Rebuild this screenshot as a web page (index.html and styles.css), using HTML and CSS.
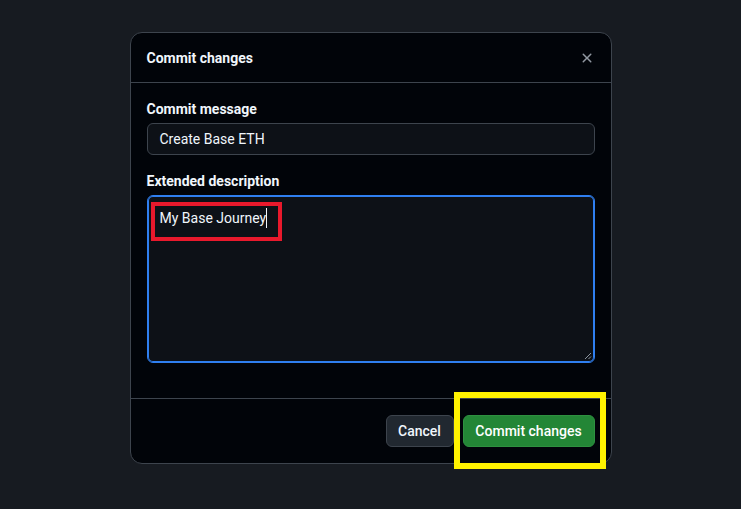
FILE: index.html
```html
<!DOCTYPE html>
<html lang="en">
<head>
<meta charset="utf-8">
<title>Commit changes</title>
<link rel="stylesheet" href="styles.css">
</head>
<body>
<div class="dialog">
  <div class="dialog-header">
    <h2 class="dialog-title">Commit changes</h2>
    <svg class="close-icon" width="16" height="16" viewBox="0 0 16 16"><path fill="#9198a1" d="M3.72 3.72a.75.75 0 0 1 1.060 0L8 6.94l3.22-3.22a.749.749 0 0 1 1.275.326.749.749 0 0 1-.215.734L9.06 8l3.22 3.22a.749.749 0 0 1-.326 1.275.749.749 0 0 1-.734-.215L8 9.06l-3.22 3.22a.751.751 0 0 1-1.042-.018.751.751 0 0 1-.018-1.042L6.94 8 3.72 4.78a.75.75 0 0 1 0-1.06Z"/></svg>
  </div>
  <div class="dialog-body">
    <label class="field-label">Commit message</label>
    <div class="text-input">Create Base ETH</div>
    <label class="field-label second">Extended description</label>
    <div class="textarea">
      <span class="typed">My Base Journey</span><span class="caret"></span>
      <span class="red-mark"></span>
      <svg class="resize" width="8" height="8" viewBox="0 0 8 8"><path d="M1 7L7 1M4.5 7L7 4.5" stroke="#8b949e" stroke-width="1"/></svg>
    </div>
  </div>
  <div class="dialog-footer">
    <button class="btn btn-default">Cancel</button>
    <div class="commit-wrap">
      <button class="btn btn-primary">Commit changes</button>
      <span class="yellow-mark"></span>
    </div>
  </div>
</div>
</body>
</html>
```
FILE: styles.css
```css
* { box-sizing: border-box; }
html, body { margin: 0; padding: 0; }
body {
  background: #171b21;
  font-family: Roboto, "Noto Sans", "Liberation Sans", sans-serif;
  color: #f0f6fc;
  font-size: 14px;
  display: flex;
  justify-content: center;
  align-items: flex-start;
  padding-top: 32px;
  height: 509px;
  overflow: hidden;
}
.dialog {
  width: 482px;
  background: #010409;
  border: 1px solid #3d444d;
  border-radius: 12px;
  display: flex;
  flex-direction: column;
}
.dialog-header {
  flex-shrink: 0;
  height: 50px;
  border-bottom: 1px solid #3d444d;
  display: flex;
  align-items: center;
  justify-content: space-between;
  padding: 0 16px;
}
.dialog-title {
  margin: 0;
  font-size: 14px;
  font-weight: 700;
  line-height: 20px;
}
.close-icon { display: block; }
.dialog-body {
  padding: 16px 16px 35px;
  display: flex;
  flex-direction: column;
}
.field-label {
  font-weight: 700;
  line-height: 20px;
  margin-bottom: 4px;
}
.field-label.second { margin-top: 16px; }
.text-input {
  height: 32px;
  background: #0d1117;
  border: 1px solid #3d444d;
  border-radius: 6px;
  padding: 0 12px;
  line-height: 30px;
  color: #f0f6fc;
}
.textarea {
  position: relative;
  height: 168px;
  background: #0d1117;
  border: 1px solid #2f7ff0;
  box-shadow: inset 0 0 0 1px #2f7ff0;
  border-radius: 6px;
  padding: 12px 12px;
  line-height: 20px;
  color: #f0f6fc;
}
.caret {
  display: inline-block;
  width: 1px;
  height: 20px;
  background: #f0f6fc;
  vertical-align: top;
}
.red-mark {
  position: absolute;
  left: 3px;
  top: 6px;
  width: 131px;
  height: 39px;
  border: 4.5px solid #e8192c;
}
.resize {
  position: absolute;
  right: 2px;
  bottom: 2px;
}
.dialog-footer {
  border-top: 1px solid #3d444d;
  padding: 16px;
  display: flex;
  justify-content: flex-end;
  gap: 9px;
}
.btn {
  display: block;
  height: 32px;
  border-radius: 6px;
  font-family: inherit;
  font-size: 14px;
  font-weight: 500;
  padding: 0;
  line-height: 30px;
  white-space: nowrap;
  text-align: center;
  cursor: pointer;
}
.btn-default {
  background: #212830;
  color: #f0f6fc;
  border: 1px solid #3d444d;
  width: 68px;
}
.btn-primary {
  background: #238636;
  color: #ffffff;
  border: 1px solid #2e9140;
  width: 132px;
}
.commit-wrap { position: relative; }
.yellow-mark {
  position: absolute;
  left: -9px;
  top: -23px;
  width: 152px;
  height: 77px;
  border: 6px solid #fff200;
}
```
